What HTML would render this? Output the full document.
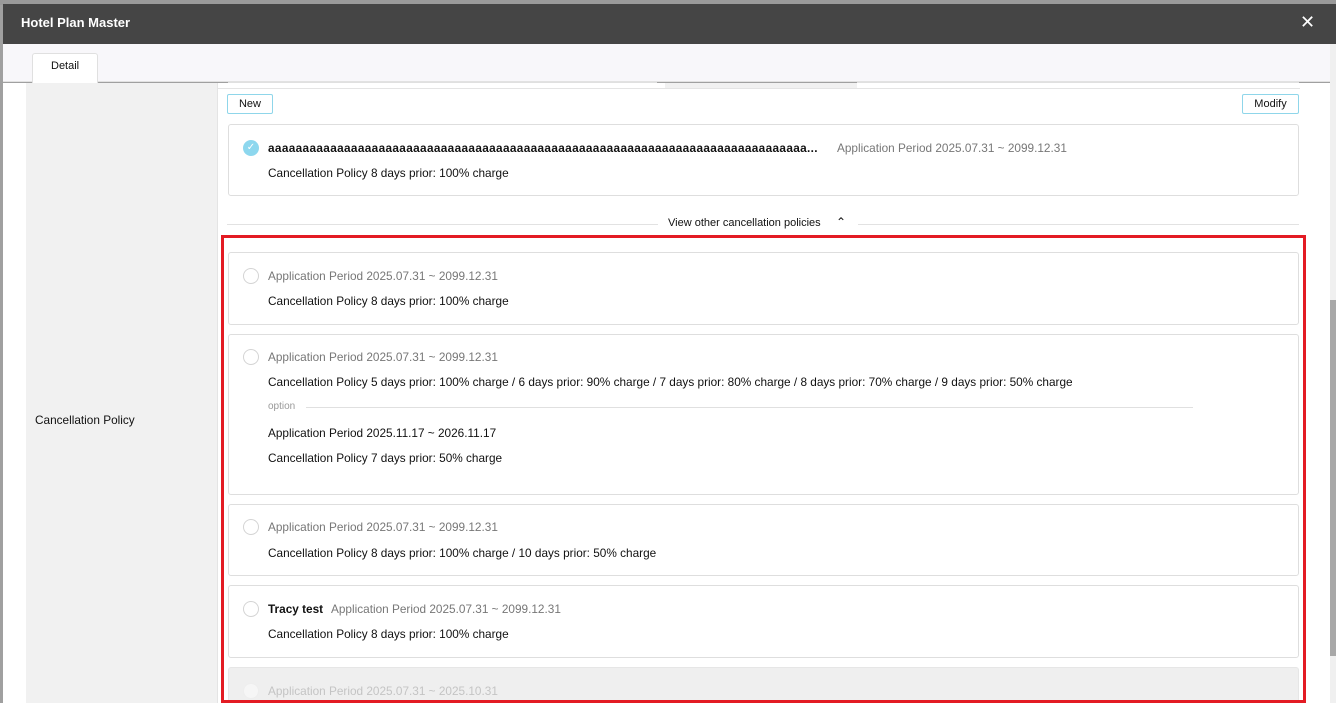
<!DOCTYPE html>
<html style="overflow:hidden"><head><style>
*{margin:0;padding:0;box-sizing:border-box}
html,body{width:1336px;height:703px;overflow:hidden}
body{position:relative;background:#a0a0a0;font-family:"Liberation Sans",sans-serif;font-size:11.8px;color:#111}
#w{position:absolute;left:0;top:0;width:1336px;height:703px;overflow:hidden}
.a{position:absolute}
.card{position:absolute;left:228px;width:1071px;border:1px solid #dedede;border-radius:3px;background:#fff}
.t{position:absolute;white-space:nowrap;font-size:11.8px}
.g{color:#777}
.r{position:absolute;width:16px;height:16px;border:1px solid #d4d4d4;border-radius:50%;background:#fff}
.btn{position:absolute;height:20px;border:1px solid #8fd6ea;border-radius:2px;background:#fff;font-size:11px;text-align:center;line-height:18px}
</style></head><body><div id="w">
<div class="a" style="left:0;top:0;width:1336px;height:5px;background:#9a9a9a"></div>
<div class="a" style="left:3px;top:4px;width:1333px;height:40px;background:#454545"></div>
<div class="t" style="left:21px;top:15px;color:#fff;font-weight:bold;font-size:13px">Hotel Plan Master</div>
<div class="t" style="left:1300px;top:12px;color:#fff;font-size:18px">✕</div>
<div class="a" style="left:3px;top:83px;width:1327px;height:620px;background:#fff"></div>
<div class="a" style="left:26px;top:83px;width:191px;height:620px;background:#f1f1f1"></div>
<div class="a" style="left:217px;top:83px;width:1px;height:620px;background:#e4e4e4"></div>
<div class="a" style="left:228px;top:75px;width:429px;height:8px;border:1px solid #e0e0e0;border-top:none"></div>
<div class="a" style="left:665px;top:83px;width:192px;height:5px;background:#f1f1f1"></div>
<div class="a" style="left:857px;top:75px;width:442px;height:8px;border:1px solid #e0e0e0;border-top:none"></div>
<div class="a" style="left:3px;top:44px;width:1333px;height:38px;background:#f8f7fa;border-bottom:1px solid #e2e2e2"></div>
<div class="a" style="left:32px;top:53px;width:66px;height:30px;background:#fff;border:1px solid #e0e0e0;border-bottom:none;border-radius:3px 3px 0 0"></div>
<div class="t" style="left:51px;top:60px;font-size:11px">Detail</div>
<div class="a" style="left:218px;top:88px;width:1082px;height:1px;background:#e4e4e4"></div>
<div class="a" style="left:1330px;top:44px;width:6px;height:659px;background:#f0f0f0"></div>
<div class="a" style="left:1330px;top:300px;width:6px;height:356px;background:#a8a8a8"></div>
<div class="t" style="left:35px;top:413px">Cancellation Policy</div>
<div class="btn" style="left:227px;top:94px;width:46px">New</div>
<div class="btn" style="left:1242px;top:94px;width:57px">Modify</div>
<div class="card" style="top:124px;height:72px"></div>
<div class="a" style="left:243px;top:140px;width:16px;height:16px;border-radius:50%;background:#8dd7ee;color:#fff;font-size:10px;text-align:center;line-height:16px">✓</div>
<div class="t" style="left:268px;top:141px;font-weight:bold;letter-spacing:0.35px">aaaaaaaaaaaaaaaaaaaaaaaaaaaaaaaaaaaaaaaaaaaaaaaaaaaaaaaaaaaaaaaaaaaaaaaaaaaaaa...</div>
<div class="t g" style="left:837px;top:141px">Application Period 2025.07.31 ~ 2099.12.31</div>
<div class="t" style="left:268px;top:166px">Cancellation Policy 8 days prior: 100% charge</div>
<div class="a" style="left:227px;top:224px;width:1072px;height:1px;background:#e2e2e2"></div>
<div class="a" style="left:658px;top:215px;width:200px;height:18px;background:#fff"></div>
<div class="t" style="left:668px;top:217px;font-size:11px">View other cancellation policies</div>
<div class="t" style="left:836px;top:215px;font-size:12px">⌃</div>
<div class="card" style="top:252px;height:73px"></div>
<div class="r" style="left:243px;top:268px"></div>
<div class="t g" style="left:268px;top:269px">Application Period 2025.07.31 ~ 2099.12.31</div>
<div class="t" style="left:268px;top:294px">Cancellation Policy 8 days prior: 100% charge</div>
<div class="card" style="top:334px;height:161px"></div>
<div class="r" style="left:243px;top:349px"></div>
<div class="t g" style="left:268px;top:350px">Application Period 2025.07.31 ~ 2099.12.31</div>
<div class="t" style="left:268px;top:375px">Cancellation Policy 5 days prior: 100% charge / 6 days prior: 90% charge / 7 days prior: 80% charge / 8 days prior: 70% charge / 9 days prior: 50% charge</div>
<div class="t" style="left:268px;top:401px;font-size:10px;color:#999">option</div>
<div class="a" style="left:306px;top:407px;width:887px;height:1px;background:#e0e0e0"></div>
<div class="t" style="left:268px;top:426px">Application Period 2025.11.17 ~ 2026.11.17</div>
<div class="t" style="left:268px;top:451px">Cancellation Policy 7 days prior: 50% charge</div>
<div class="card" style="top:504px;height:72px"></div>
<div class="r" style="left:243px;top:519px"></div>
<div class="t g" style="left:268px;top:520px">Application Period 2025.07.31 ~ 2099.12.31</div>
<div class="t" style="left:268px;top:546px">Cancellation Policy 8 days prior: 100% charge / 10 days prior: 50% charge</div>
<div class="card" style="top:585px;height:73px"></div>
<div class="r" style="left:243px;top:601px"></div>
<div class="t" style="left:268px;top:602px;font-weight:bold">Tracy test</div>
<div class="t g" style="left:331px;top:602px">Application Period 2025.07.31 ~ 2099.12.31</div>
<div class="t" style="left:268px;top:627px">Cancellation Policy 8 days prior: 100% charge</div>
<div class="card" style="top:667px;height:36px;background:#efefef;border-color:#e6e6e6;border-bottom:none;border-radius:3px 3px 0 0"></div>
<div class="r" style="left:243px;top:683px;background:#f6f6f6;border-color:#eee"></div>
<div class="t" style="left:268px;top:684px;color:#c4c4c4">Application Period 2025.07.31 ~ 2025.10.31</div>
<div class="a" style="left:221px;top:235px;width:1085px;height:468px;border:3px solid #e31b23"></div>
</div></body></html>
